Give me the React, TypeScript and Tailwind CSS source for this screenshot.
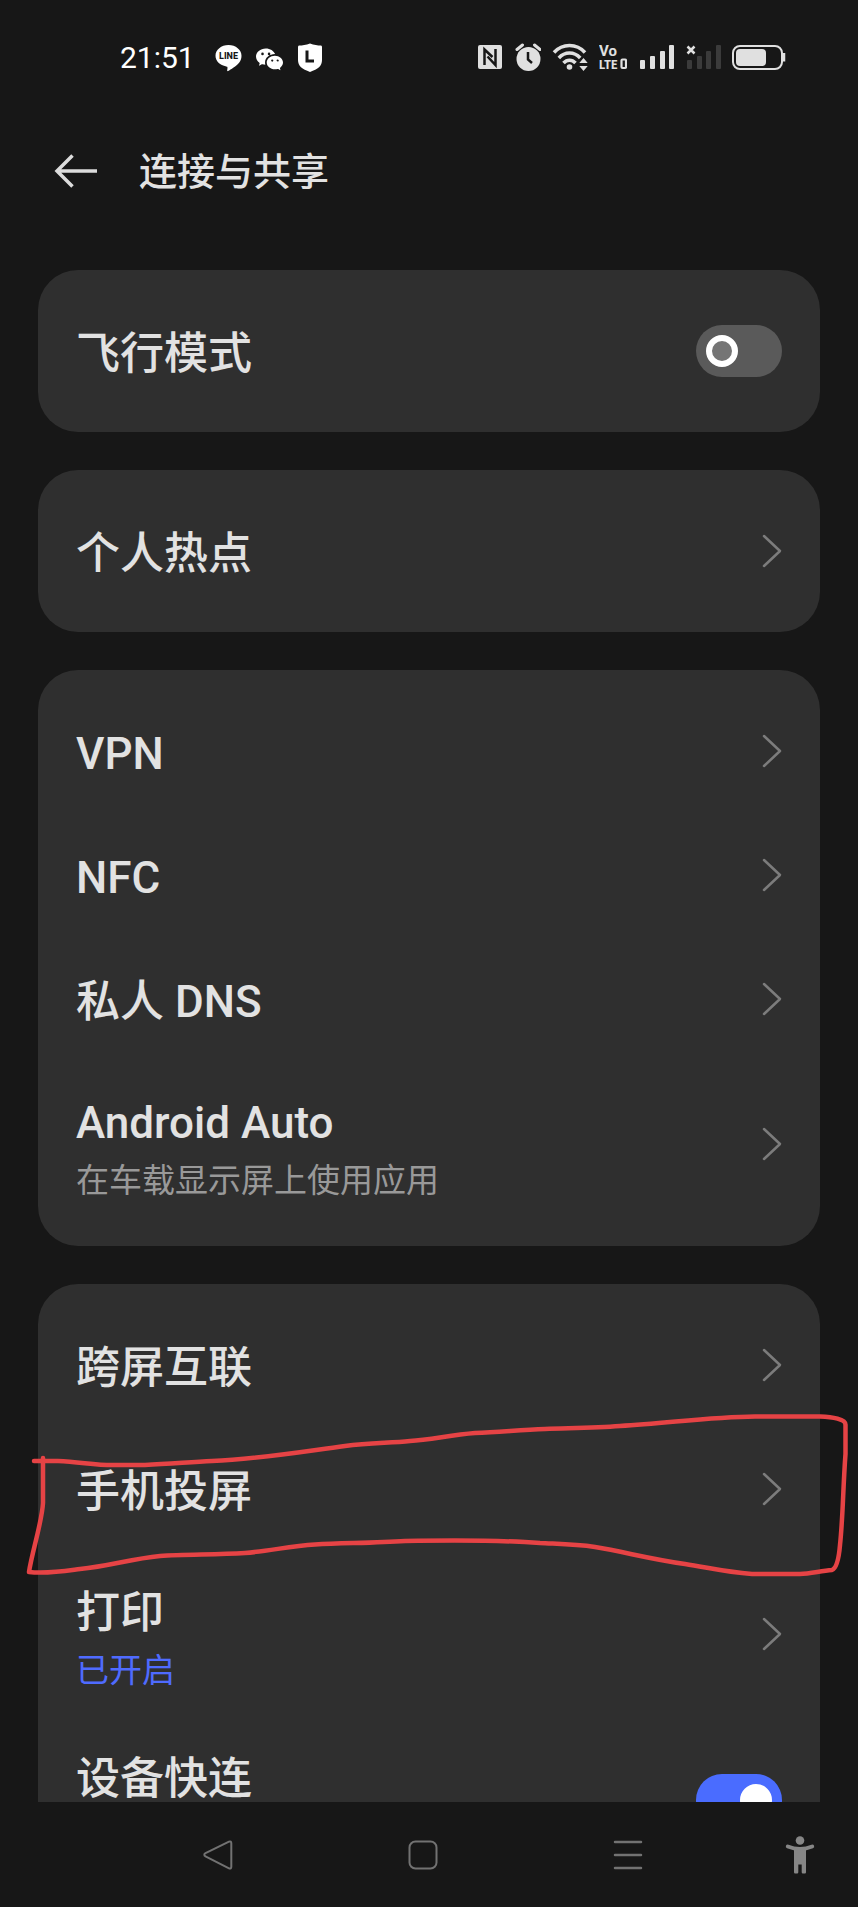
import { ReactNode, useState } from "react";
import { BsWechat } from "react-icons/bs";

type Item = {
  title: string;
  note?: string;
  noteActive?: boolean;
  toggle?: boolean;
  on?: boolean;
  tall?: boolean;
  marked?: boolean;
};

const groups: Item[][] = [
  [{ title: "飞行模式", toggle: true }],
  [{ title: "个人热点" }],
  [
    { title: "VPN" },
    { title: "NFC" },
    { title: "私人 DNS" },
    { title: "Android Auto", note: "在车载显示屏上使用应用" },
  ],
  [
    { title: "跨屏互联" },
    { title: "手机投屏", marked: true },
    { title: "打印", note: "已开启", noteActive: true },
    { title: "设备快连", toggle: true, on: true, tall: true },
  ],
];

function StatusBar() {
  return (
    <div className="flex h-[116px] shrink-0 items-center justify-between pl-[120px] pr-[72px] text-[#e0e0e0]">
      <div className="flex items-center gap-3.5 text-white">
        <span className="mr-1.5 text-[30px] leading-8">21:51</span>
        <svg width="27" height="30" viewBox="0 0 27 30" aria-label="LINE">
          <path
            fill="currentColor"
            d="M13.5 2C6.3 2 .5 6.8.5 12.8c0 5.300 4.500 9.600 10.800 10.600 1.500.3 1.300.9.9 4.100-.1.600.300.8.9.5 2.500-1.200 8.400-5 11-8.200 1.600-2 2.400-4.300 2.400-7C26.500 6.800 20.700 2 13.500 2z"
          />
          <text x="13.500" y="16" textAnchor="middle" fontSize="9" fontWeight="800" fill="#171717">
            LINE
          </text>
        </svg>
        <BsWechat className="size-[27px]" />
        <svg width="26" height="30" viewBox="0 0 26 30" aria-label="L">
          <path
            fill="currentColor"
            d="M13 .5c4 1.500 8 2 10.500 2.100 1 0 1.500.6 1.500 1.500V17c0 6-4 9-12 12C5 26 1 23 1 17V4.100c0-.9.5-1.500 1.500-1.500C5 2.500 9 2 13 .5z"
          />
          <path d="M10 7.500v10.500h7" fill="none" stroke="#171717" strokeWidth="3" />
        </svg>
      </div>

      <div className="flex items-center gap-[11px]">
        <svg width="26" height="30" viewBox="0 0 26 30" aria-label="NFC">
          <rect y="2" width="24" height="24" rx="2" fill="currentColor" />
          <path
            d="M6.500 22V6.500L14.500 14M17.500 6v16L9.500 13.500"
            fill="none"
            stroke="#171717"
            strokeWidth="2.500"
          />
        </svg>
        <svg width="26" height="30" viewBox="0 0 26 30" aria-label="闹钟">
          <circle cx="13.500" cy="16" r="12" fill="currentColor" />
          <path d="M2 6.500 7.500 2M25 6.500 19.500 2" stroke="currentColor" strokeWidth="3" strokeLinecap="round" />
          <path d="M13 9v7.500l4 3.500" fill="none" stroke="#171717" strokeWidth="2.500" />
        </svg>
        <svg width="36" height="30" viewBox="0 0 36 30" aria-label="WLAN">
          <g fill="none" stroke="currentColor" strokeWidth="3.500">
            <path d="M2 9.500C10.500.2 24.500.2 33 9.500" />
            <path d="M6.800 15c6-6.600 15.400-6.600 21.400 0" />
            <path d="M11.500 20c3.500-3.800 8.500-3.800 12 0" />
          </g>
          <circle cx="17.500" cy="24" r="2.800" fill="currentColor" />
          <path d="M31.500 15l4.200 5h-8.400zM31.500 28l4.200-5h-8.400z" fill="currentColor" />
        </svg>
        <svg width="28" height="30" viewBox="0 0 28 30" aria-label="VoLTE">
          <text x="0" y="13" fill="currentColor" fontSize="15" fontWeight="700">
            Vo
          </text>
          <text
            x="0"
            y="26"
            fill="currentColor"
            fontSize="13"
            fontWeight="700"
            className="font-['Roboto_Condensed','Liberation_Sans_Narrow',Roboto]"
          >
            LTE
          </text>
          <rect x="22.500" y="16.500" width="4.500" height="8.500" rx="1" fill="none" stroke="currentColor" strokeWidth="2.200" />
        </svg>
        <svg width="36" height="30" viewBox="0 0 36 30" aria-label="信号">
          <g fill="currentColor">
            <rect x="2" y="17" width="5" height="9" rx="1" />
            <rect x="12" y="13" width="5" height="13" rx="1" />
            <rect x="22" y="8" width="5" height="18" rx="1" />
            <rect x="31" y="2" width="5" height="24" rx="1" />
          </g>
        </svg>
        <svg width="36" height="30" viewBox="0 0 36 30" aria-label="无信号">
          <g fill="#3b3b3b">
            <rect x="2" y="17" width="5" height="9" rx="1" />
            <rect x="12" y="13" width="5" height="13" rx="1" />
            <rect x="21" y="8" width="5" height="18" rx="1" />
            <rect x="31" y="2" width="5" height="24" rx="1" />
          </g>
          <path d="M2.500 3.500l7 7M9.500 3.500l-7 7" stroke="currentColor" strokeWidth="2.500" />
        </svg>
        <svg width="54" height="30" viewBox="0 0 54 30" aria-label="电量">
          <rect x="1" y="3" width="49" height="23" rx="7" fill="none" stroke="currentColor" strokeWidth="2" />
          <rect x="4" y="6" width="30" height="17" rx="4" fill="currentColor" />
          <path d="M52 10v8.500" stroke="currentColor" strokeWidth="2.500" />
        </svg>
      </div>
    </div>
  );
}

function Switch({ on, label }: { on: boolean; label: string }) {
  const [checked, setChecked] = useState(on);

  return (
    <input
      type="checkbox"
      role="switch"
      aria-label={label}
      checked={checked}
      onChange={(e) => setChecked(e.target.checked)}
      className="flex h-[52px] w-[86px] shrink-0 appearance-none items-center rounded-full bg-[#5a5a5a] px-2.5 before:size-8 before:rounded-full before:border-[6px] before:border-white before:bg-[#757575] checked:justify-end checked:bg-[#4a6cff] checked:before:bg-white"
    />
  );
}

function Chevron() {
  return (
    <svg width="20" height="34" viewBox="0 0 20 34" fill="none" className="shrink-0" aria-hidden="true">
      <path
        d="M2 2l16 15L2 32"
        stroke="#7c7c7c"
        strokeWidth="2.500"
        strokeLinecap="round"
        strokeLinejoin="round"
      />
    </svg>
  );
}

// hand-drawn red outline round a row
function Mark() {
  return (
    <svg
      className="pointer-events-none absolute -left-[18px] -top-[15px] h-[172px] w-[calc(100%+56px)]"
      viewBox="0 0 838 172"
      preserveAspectRatio="none"
      fill="none"
      aria-hidden="true"
    >
      <path
        d="M14 49H38C60 50 75 53 92 53H125C150 52 170 50 192 49C240 47 280 40 325 34C350 31 370 31 390 29C410 28 430 23 455 21C480 20 500 18 525 17C555 16 575 16 600 14C650 11 690 5 735 4.500H800C812 5 826 7 825.500 13V42C823 75 823 105 820 133C819 145 817 156 812 158C800 159 790 162 780 162H732C705 160 690 156 665 152C630 147 605 140 575 135C555 132 540 132 520 131C480 128 440 128 385 129C355 131 325 131 295 132.500C270 134 250 139 225 141C195 143 165 142 140 144C110 147 90 154 60 157C45 159 28 162 9 160C12 140 22 110 23 91V46"
        stroke="#e64345"
        strokeWidth="4.500"
        strokeLinecap="round"
        strokeLinejoin="round"
      />
    </svg>
  );
}

function Row({ item }: { item: Item }) {
  if (item.toggle) {
    return (
      <label
        className={
          item.tall
            ? "flex min-h-[166px] items-center justify-between px-[38px]"
            : "flex min-h-[124px] items-center justify-between px-[38px]"
        }
      >
        <span
          className={
            item.tall
              ? "self-start pt-10 text-[44px] font-medium leading-[44px]"
              : "pt-1.5 text-[44px] font-medium leading-[44px]"
          }
        >
          {item.title}
        </span>
        <Switch on={!!item.on} label={item.title} />
      </label>
    );
  }

  return (
    <button
      type="button"
      className={
        item.note
          ? "relative flex min-h-[166px] w-full items-center justify-between px-[38px] text-left"
          : "relative flex min-h-[124px] w-full items-center justify-between px-[38px] text-left"
      }
    >
      <span className={item.note ? "flex flex-col gap-3.5 pt-4" : "pt-1.5"}>
        <span className="block text-[44px] font-medium leading-[44px]">{item.title}</span>
        {item.note && (
          <span
            className={
              item.noteActive
                ? "text-[33px] leading-[44px] text-[#4f6bff]"
                : "text-[33px] leading-[44px] text-[#999999]"
            }
          >
            {item.note}
          </span>
        )}
      </span>
      <Chevron />
      {item.marked && <Mark />}
    </button>
  );
}

function NavButton({ label, children }: { label: string; children: ReactNode }) {
  return (
    <button type="button" aria-label={label} className="flex flex-1 items-center justify-center">
      {children}
    </button>
  );
}

function NavBar() {
  return (
    <nav className="flex h-[105px] shrink-0 pl-[115px] text-[#727272]">
      <NavButton label="返回">
        <svg width="30" height="30" viewBox="0 0 30 30" fill="none" stroke="currentColor" strokeWidth="2">
          <path d="M26 1.700 2.500 13.200c-1.600.8-1.600 2.300 0 3.100L26 28.300c1.500.7 2.300 0 2.300-1.500V3.200c0-1.500-.8-2.200-2.300-1.500z" />
        </svg>
      </NavButton>
      <NavButton label="主页">
        <svg width="30" height="30" viewBox="0 0 30 30" fill="none" stroke="currentColor" strokeWidth="2">
          <rect x="1.500" y="1.500" width="27" height="27" rx="6" />
        </svg>
      </NavButton>
      <NavButton label="最近任务">
        <svg width="30" height="30" viewBox="0 0 30 30" stroke="currentColor" strokeWidth="2.500" strokeLinecap="round">
          <path d="M2 2h26M2 15h26M2 28h26" />
        </svg>
      </NavButton>
      <button type="button" aria-label="无障碍" className="flex w-32 items-center justify-center pl-3 text-[#868686]">
        <svg width="30" height="40" viewBox="0 0 30 40" fill="currentColor">
          <circle cx="15" cy="5.500" r="4.300" />
          <path d="M9 13.500h12V37c0 1-.5 1.500-1.500 1.500h-1.200c-1 0-1.600-.5-1.600-1.500v-7.500h-3.400V37c0 1-.6 1.500-1.600 1.500h-1.200C9.500 38.500 9 38 9 37z" />
          <path d="M2.800 11.500c8 3.200 16.400 3.200 24.400 0" fill="none" stroke="currentColor" strokeWidth="4" strokeLinecap="round" />
        </svg>
      </button>
    </nav>
  );
}

export default function App() {
  return (
    <div className="flex h-screen flex-col bg-[#171717] font-[Roboto,'Noto_Sans_CJK_SC',sans-serif] text-[#e2e2e2]">
      <StatusBar />
      <header className="flex h-[110px] shrink-0 items-center gap-[41px] pl-[54px]">
        <button type="button" aria-label="返回">
          <svg width="44" height="34" viewBox="0 0 44 34" fill="none" stroke="#dcdcdc" strokeWidth="3.500">
            <path d="M43 17H3M18.500 1.500 3 17l15.500 15.500" />
          </svg>
        </button>
        <h1 className="pt-0.5 text-[38px] font-medium leading-[48px]">连接与共享</h1>
      </header>
      <main className="flex min-h-0 flex-1 flex-col gap-[38px] overflow-x-hidden overflow-y-auto px-[38px] pt-11 [scrollbar-width:none]">
        {groups.map((items) => (
          <section key={items[0].title} className="shrink-0 rounded-[40px] bg-[#2f2f2f] py-[19px]">
            {items.map((item) => (
              <Row key={item.title} item={item} />
            ))}
          </section>
        ))}
      </main>
      <NavBar />
    </div>
  );
}
